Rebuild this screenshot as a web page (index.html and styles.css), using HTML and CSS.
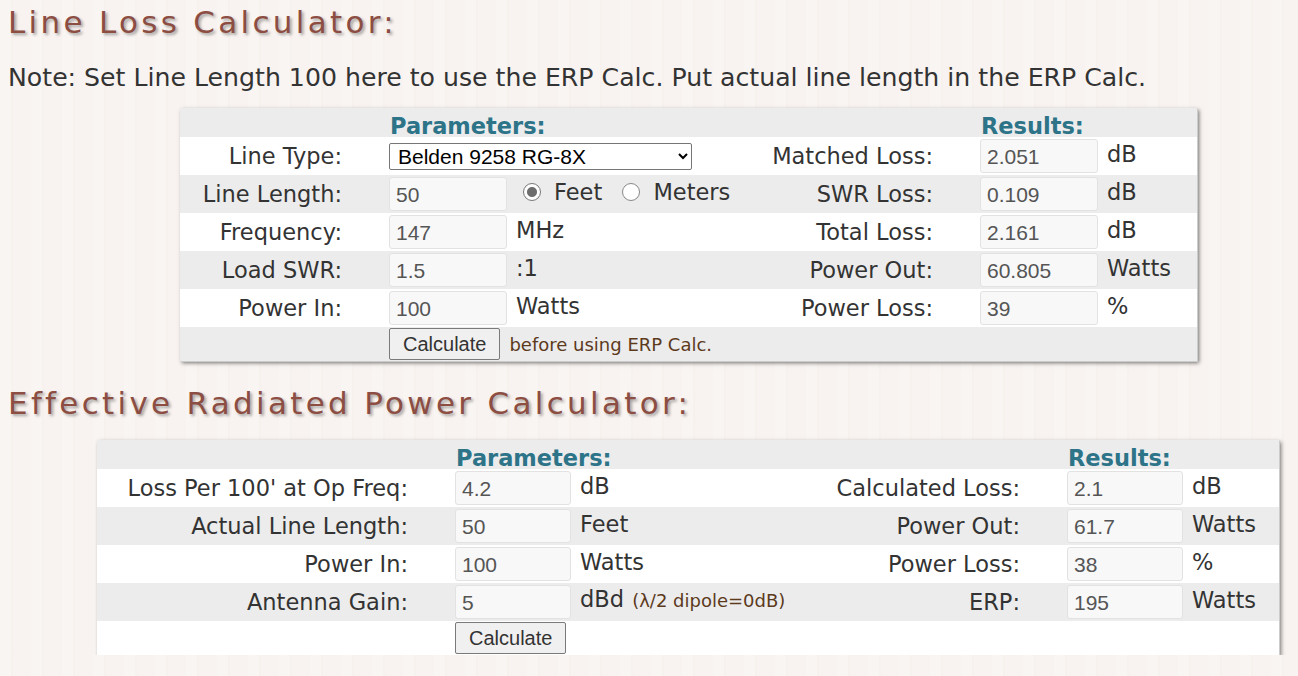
FILE: index.html
```html
<!DOCTYPE html>
<html lang="en">

<head>
  <meta charset="UTF-8">
  <meta name="viewport" content="width=device-width, initial-scale=1.0">
  <title>Line Loss &amp; ERP Calculator</title>
  <link rel="stylesheet" href="styles.css">
</head>

<body>
  <h2 class="calc-title">Line Loss Calculator:</h2>
  <p class="note">Note: Set Line Length 100 here to use the ERP Calc. Put actual line length in the ERP Calc.</p>

  <table class="calc loss-calc">
    <colgroup>
      <col class="c-label"><col class="c-input"><col class="c-unit">
      <col class="c-label2"><col class="c-input"><col class="c-unit2">
    </colgroup>
    <tr class="head">
      <td></td>
      <td colspan="2">Parameters:</td>
      <td></td>
      <td colspan="2">Results:</td>
    </tr>
    <tr>
      <td class="lbl">Line Type:</td>
      <td colspan="2">
        <select class="line-type">
          <option>Belden 9258 RG-8X</option>
          <option>Belden 9913</option>
          <option>LMR-400</option>
          <option>RG-58</option>
        </select>
      </td>
      <td class="lbl">Matched Loss:</td>
      <td><input type="text" value="2.051" readonly></td>
      <td class="unit">dB</td>
    </tr>
    <tr class="alt">
      <td class="lbl">Line Length:</td>
      <td><input type="text" value="50"></td>
      <td class="unit radios">
        <label><span class="radio on"></span>Feet</label>
        <label><span class="radio"></span>Meters</label>
      </td>
      <td class="lbl">SWR Loss:</td>
      <td><input type="text" value="0.109" readonly></td>
      <td class="unit">dB</td>
    </tr>
    <tr>
      <td class="lbl">Frequency:</td>
      <td><input type="text" value="147"></td>
      <td class="unit">MHz</td>
      <td class="lbl">Total Loss:</td>
      <td><input type="text" value="2.161" readonly></td>
      <td class="unit">dB</td>
    </tr>
    <tr class="alt">
      <td class="lbl">Load SWR:</td>
      <td><input type="text" value="1.5"></td>
      <td class="unit">:1</td>
      <td class="lbl">Power Out:</td>
      <td><input type="text" value="60.805" readonly></td>
      <td class="unit">Watts</td>
    </tr>
    <tr>
      <td class="lbl">Power In:</td>
      <td><input type="text" value="100"></td>
      <td class="unit">Watts</td>
      <td class="lbl">Power Loss:</td>
      <td><input type="text" value="39" readonly></td>
      <td class="unit">%</td>
    </tr>
    <tr class="alt foot">
      <td></td>
      <td colspan="2"><button type="button">Calculate</button><span class="hint">before using ERP Calc.</span></td>
      <td></td>
      <td></td>
      <td></td>
    </tr>
  </table>

  <h2 class="calc-title erp-title">Effective Radiated Power Calculator:</h2>

  <table class="calc erp-calc">
    <colgroup>
      <col class="c-label"><col class="c-input"><col class="c-unit">
      <col class="c-label2"><col class="c-input"><col class="c-unit2">
    </colgroup>
    <tr class="head">
      <td></td>
      <td colspan="2">Parameters:</td>
      <td></td>
      <td colspan="2">Results:</td>
    </tr>
    <tr>
      <td class="lbl">Loss Per 100' at Op Freq:</td>
      <td><input type="text" value="4.2"></td>
      <td class="unit">dB</td>
      <td class="lbl">Calculated Loss:</td>
      <td><input type="text" value="2.1" readonly></td>
      <td class="unit">dB</td>
    </tr>
    <tr class="alt">
      <td class="lbl">Actual Line Length:</td>
      <td><input type="text" value="50"></td>
      <td class="unit">Feet</td>
      <td class="lbl">Power Out:</td>
      <td><input type="text" value="61.7" readonly></td>
      <td class="unit">Watts</td>
    </tr>
    <tr>
      <td class="lbl">Power In:</td>
      <td><input type="text" value="100"></td>
      <td class="unit">Watts</td>
      <td class="lbl">Power Loss:</td>
      <td><input type="text" value="38" readonly></td>
      <td class="unit">%</td>
    </tr>
    <tr class="alt">
      <td class="lbl">Antenna Gain:</td>
      <td><input type="text" value="5"></td>
      <td class="unit">dBd <span class="hint inline">(&lambda;/2 dipole=0dB)</span></td>
      <td class="lbl">ERP:</td>
      <td><input type="text" value="195" readonly></td>
      <td class="unit">Watts</td>
    </tr>
    <tr class="foot">
      <td></td>
      <td colspan="2"><button type="button">Calculate</button></td>
      <td></td>
      <td></td>
      <td></td>
    </tr>
  </table>
</body>

</html>
```

FILE: styles.css
```css
body {
  margin: 0 8px;
  font-family: "DejaVu Sans", Verdana, sans-serif;
  color: #333;
  background-color: #f8f3f0;
  background-image: repeating-linear-gradient(90deg, rgba(255, 255, 255, 0.2) 0 11px, rgba(240, 230, 226, 0.15) 11px 13px, rgba(255, 255, 255, 0) 13px 31px);
}

.calc-title {
  margin: 0;
  font-size: 31px;
  line-height: 44px;
  font-weight: normal;
  letter-spacing: 3.3px;
  color: #8c4d42;
  text-shadow: 2px 2px 3px rgba(0, 0, 0, 0.35);
}

.erp-title {
  margin-top: 20px;
}

.note {
  margin: 18px 0 0;
  font-size: 25.2px;
  line-height: 32px;
}

.calc {
  border-collapse: collapse;
  table-layout: fixed;
  margin-top: 14px;
  background: #fff;
  box-shadow: 1px 1px 0 #ccc, 2px 2px 4px rgba(0, 0, 0, 0.55);
  font-size: 22.5px;
  line-height: 26px;
}

.calc td {
  padding: 0;
  height: 38px;
  white-space: nowrap;
  vertical-align: middle;
}

.calc .alt td,
.calc .head td {
  background: #ececec;
}

.calc .head td {
  height: 29px;
  font-weight: bold;
  color: #2d7489;
  line-height: 22px;
  vertical-align: bottom;
  padding-left: 1px;
}

.calc .foot td {
  height: 34px;
}

.calc .lbl {
  text-align: right;
  padding-right: 47px;
}

/* units sit a little above the row's middle */
.calc .unit {
  height: 33px;
  padding-left: 9px;
  padding-bottom: 5px;
}

/* column widths, first table */
.loss-calc {
  width: 1017px;
  margin-left: 172px;
}

.loss-calc .c-label { width: 209px; }
.loss-calc .c-input { width: 118px; }
.loss-calc .c-unit { width: 233px; }
.loss-calc .c-label2 { width: 240px; }
.loss-calc .c-unit2 { width: 99px; }

/* column widths, second table */
.erp-calc {
  width: 1182px;
  margin-left: 89px;
  margin-top: 15px;
}

.erp-calc .c-label { width: 358px; }
.erp-calc .c-input { width: 116px; }
.erp-calc .c-unit { width: 236px; }
.erp-calc .c-label2 { width: 260px; }
.erp-calc .c-unit2 { width: 96px; }

.calc input[type="text"] {
  display: block;
  box-sizing: border-box;
  width: 100%;
  height: 34px;
  margin: 0;
  padding: 1px 6px 0;
  border: 1px solid #e2e2e2;
  border-radius: 3px;
  background: #f8f8f8;
  font-family: "Liberation Sans", Arial, sans-serif;
  font-size: 21px;
  color: #555;
}

.line-type {
  display: block;
  box-sizing: border-box;
  width: 303px;
  height: 27px;
  border: 1px solid #767676;
  border-radius: 2px;
  background: #fff;
  padding: 0 4px;
  font-family: "Liberation Sans", Arial, sans-serif;
  font-size: 21px;
  color: #000;
}

.radios label {
  margin-right: 6px;
}

.radio {
  display: inline-block;
  box-sizing: border-box;
  width: 18px;
  height: 18px;
  margin: 0 13px 0 7px;
  border: 1px solid #888;
  border-radius: 50%;
  background: #fff;
  vertical-align: -1px;
}

.radio.on {
  border-color: #777;
  background: radial-gradient(circle, #6d6d6d 0 4.5px, #fff 5.5px);
}

.calc button {
  height: 32px;
  padding: 0 13px;
  border: 1px solid #7a7a7a;
  border-radius: 2px;
  background: #f0f0f0;
  font-family: "Liberation Sans", Arial, sans-serif;
  font-size: 20px;
  color: #333;
  vertical-align: middle;
}

.hint {
  font-size: 18px;
  color: #5c3a1c;
  margin-left: 9px;
}

.hint.inline {
  margin-left: 1px;
}
```
